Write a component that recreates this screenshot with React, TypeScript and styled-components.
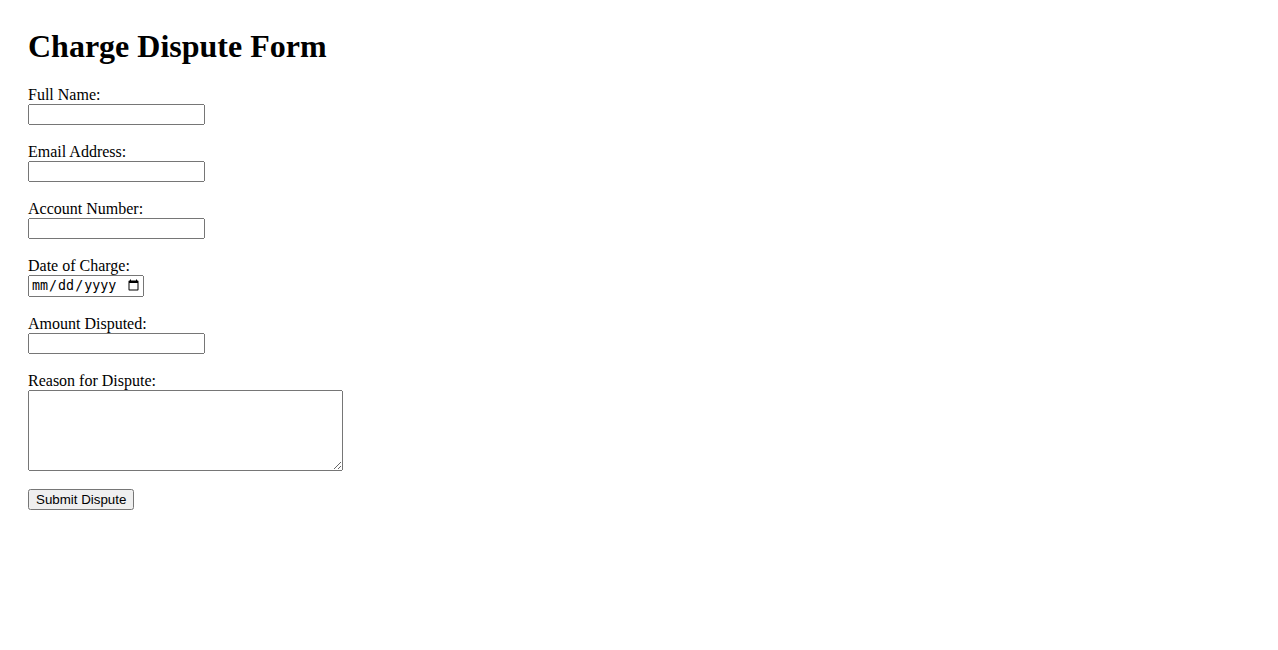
import styled, { createGlobalStyle } from 'styled-components'

const GlobalStyle = createGlobalStyle`
  body {
    margin: 0;
    padding: 28px;
    font-family: "Liberation Serif", "Times New Roman", serif;
    font-size: 16px;
    color: #000;
    background: #fff;
  }
`

const Title = styled.h1`
  margin: 0 0 21px;
  font-size: 32px;
  font-weight: bold;
  line-height: 37px;
`

const DisputeForm = styled.form`
  display: flex;
  flex-direction: column;
  align-items: flex-start;
`

const Field = styled.div`
  display: flex;
  flex-direction: column;
  align-items: flex-start;
  margin-bottom: 18px;
`

const Label = styled.label`
  line-height: 18px;
`

const TextInput = styled.input`
  width: 177px;
  height: 21px;
  box-sizing: border-box;
  margin: 0;
`

const DateInput = styled.input`
  width: 116px;
  height: 22px;
  box-sizing: border-box;
  margin: 0;
`

const ReasonBox = styled.textarea`
  width: 315px;
  height: 81px;
  box-sizing: border-box;
  margin: 0;
`

const SubmitButton = styled.button`
  margin: 0;
  height: 21px;
  font-family: "Liberation Sans", Arial, sans-serif;
  font-size: 13.33px;
`

const fields = [
  { id: 'name', label: 'Full Name:', type: 'text' },
  { id: 'email', label: 'Email Address:', type: 'email' },
  { id: 'account', label: 'Account Number:', type: 'text' }
]

const App = () => {
  return (
    <>
      <GlobalStyle />
      <Title>Charge Dispute Form</Title>
      <DisputeForm onSubmit={(e: any) => e.preventDefault()}>
        {fields.map((f) => (
          <Field key={f.id}>
            <Label htmlFor={f.id}>{f.label}</Label>
            <TextInput id={f.id} type={f.type} />
          </Field>
        ))}
        <Field>
          <Label htmlFor='date'>Date of Charge:</Label>
          <DateInput id='date' type='date' />
        </Field>
        <Field>
          <Label htmlFor='amount'>Amount Disputed:</Label>
          <TextInput id='amount' type='text' />
        </Field>
        <Field>
          <Label htmlFor='reason'>Reason for Dispute:</Label>
          <ReasonBox id='reason' />
        </Field>
        <SubmitButton type='submit'>Submit Dispute</SubmitButton>
      </DisputeForm>
    </>
  )
}

export default App
